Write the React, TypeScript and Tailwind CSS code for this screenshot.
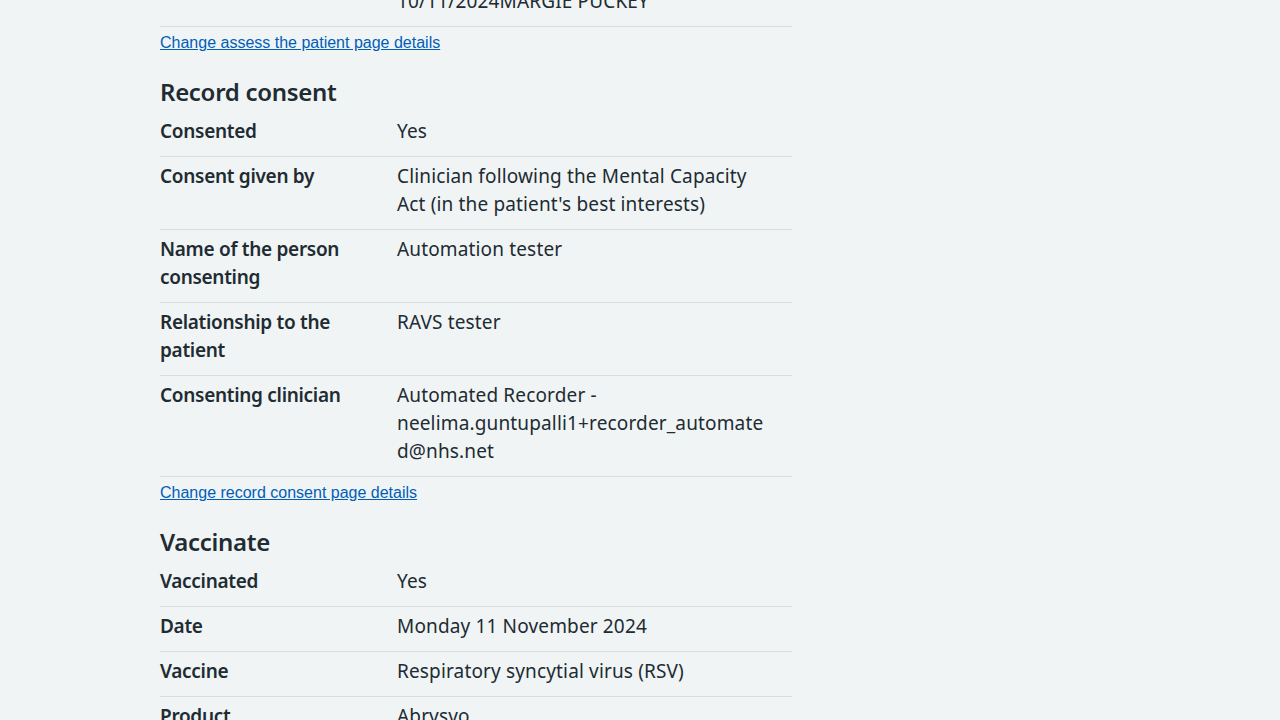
const body = "font-['Noto_Sans','Open_Sans',sans-serif]";
const link = "block font-['Liberation_Sans',Arial,sans-serif] text-[16px] leading-[24px] tracking-normal text-[#005eb8] underline";
const heading = 'mt-[21px] mb-[4px] text-[24px] leading-[32px] font-semibold tracking-[-0.3px]';

type Row = { label: string; value: React.ReactNode };

const consentRows: Row[] = [
    { label: 'Consented', value: 'Yes' },
    { label: 'Consent given by', value: <>Clinician following the Mental Capacity<br />Act (in the patient's best interests)</> },
    { label: 'Name of the person consenting', value: 'Automation tester' },
    { label: 'Relationship to the patient', value: 'RAVS tester' },
    { label: 'Consenting clinician', value: <>Automated Recorder -<br />neelima.guntupalli1+recorder_automate<br />d@nhs.net</> },
];

const vaccinateRows: Row[] = [
    { label: 'Vaccinated', value: 'Yes' },
    { label: 'Date', value: 'Monday 11 November 2024' },
    { label: 'Vaccine', value: 'Respiratory syncytial virus (RSV)' },
    { label: 'Product', value: 'Abrysvo' },
];

function SummaryRow({ label, value }: Row) {
    return (
        <div className="flex border-b border-[#d8dde0] pt-[5px] pb-[11px]">
            <dt className="w-[237px] pr-6 font-semibold tracking-[-0.3px]">{label}</dt>
            <dd className="w-[380px]">{value}</dd>
        </div>
    );
}

export default function App() {
    return (
        <div className={`min-h-screen bg-[#f0f4f5] text-[#212b32] ${body} text-[19px] leading-[28px] tracking-[0.15px]`}>
            <div className="ml-[160px] w-[632px] -mt-[18px]">
                <dl>
                    <SummaryRow label="" value="10/11/2024MARGIE PUCKEY" />
                </dl>
                <a href="#" className={`mt-[4px] ${link}`}>
                    Change assess the patient page details
                </a>

                <h2 className={heading}>Record consent</h2>
                <dl>
                    {consentRows.map((r) => (
                        <SummaryRow key={r.label} {...r} />
                    ))}
                </dl>
                <a href="#" className={`mt-[4px] ${link}`}>
                    Change record consent page details
                </a>

                <h2 className={heading}>Vaccinate</h2>
                <dl>
                    {vaccinateRows.map((r) => (
                        <SummaryRow key={r.label} {...r} />
                    ))}
                </dl>
            </div>
        </div>
    );
}
